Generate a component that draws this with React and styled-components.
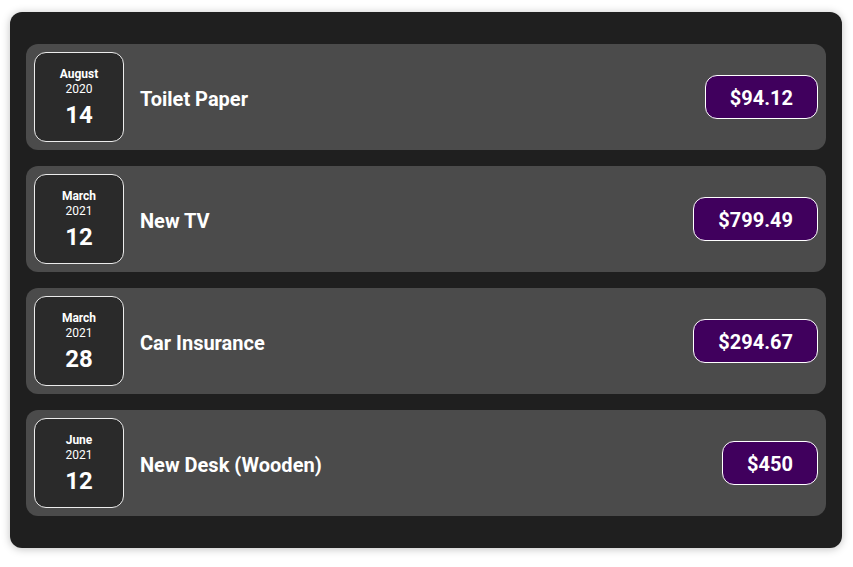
import React from "react";
import styled, { createGlobalStyle } from "styled-components";

const Global = createGlobalStyle`
  html, body { margin: 0; padding: 0; background: #ffffff; }
  body { font-family: Roboto, "Noto Sans", sans-serif; }
  * { box-sizing: border-box; }
`;

const Page = styled.div`
  padding: 12px 11px 19px 10px;
`;

const Card = styled.div`
  background: #1f1f1f;
  border-radius: 12px;
  box-shadow: 0 1px 8px rgba(0, 0, 0, 0.25);
  padding: 32px 16px;
  display: flex;
  flex-direction: column;
  gap: 16px;
`;

const Item = styled.div`
  display: flex;
  align-items: center;
  background: #4b4b4b;
  border-radius: 12px;
  padding: 8px;
  height: 106px;
`;

const DateBox = styled.div`
  width: 90px;
  height: 90px;
  flex: none;
  border: 1px solid #ececec;
  border-radius: 12px;
  background: #2a2a2a;
  color: #ffffff;
  display: flex;
  flex-direction: column;
  align-items: center;
  justify-content: center;
  padding-top: 6px;
`;

const Month = styled.div`
  font-size: 12px;
  font-weight: 700;
  line-height: 16px;
`;

const Year = styled.div`
  font-size: 12px;
  line-height: 14px;
`;

const Day = styled.div`
  font-size: 24px;
  font-weight: 700;
  line-height: 38px;
`;

const Title = styled.h2`
  flex: 1;
  margin: 0 16px;
  padding-top: 3px;
  font-size: 20px;
  font-weight: 700;
  color: #ffffff;
`;

const Price = styled.div`
  font-size: 20px;
  font-weight: 700;
  color: #ffffff;
  background: #40005d;
  border: 1px solid #ffffff;
  border-radius: 12px;
  padding: 9px 24px 7px;
  line-height: 26px;
`;

const expenses = [
  { month: "August", year: "2020", day: "14", title: "Toilet Paper", price: "$94.12" },
  { month: "March", year: "2021", day: "12", title: "New TV", price: "$799.49" },
  { month: "March", year: "2021", day: "28", title: "Car Insurance", price: "$294.67" },
  { month: "June", year: "2021", day: "12", title: "New Desk (Wooden)", price: "$450" },
];

export default function App() {
  return (
    <>
      <Global />
      <Page>
        <Card>
          {expenses.map((e, i) => (
            <Item key={i}>
              <DateBox>
                <Month>{e.month}</Month>
                <Year>{e.year}</Year>
                <Day>{e.day}</Day>
              </DateBox>
              <Title>{e.title}</Title>
              <Price>{e.price}</Price>
            </Item>
          ))}
        </Card>
      </Page>
    </>
  );
}
